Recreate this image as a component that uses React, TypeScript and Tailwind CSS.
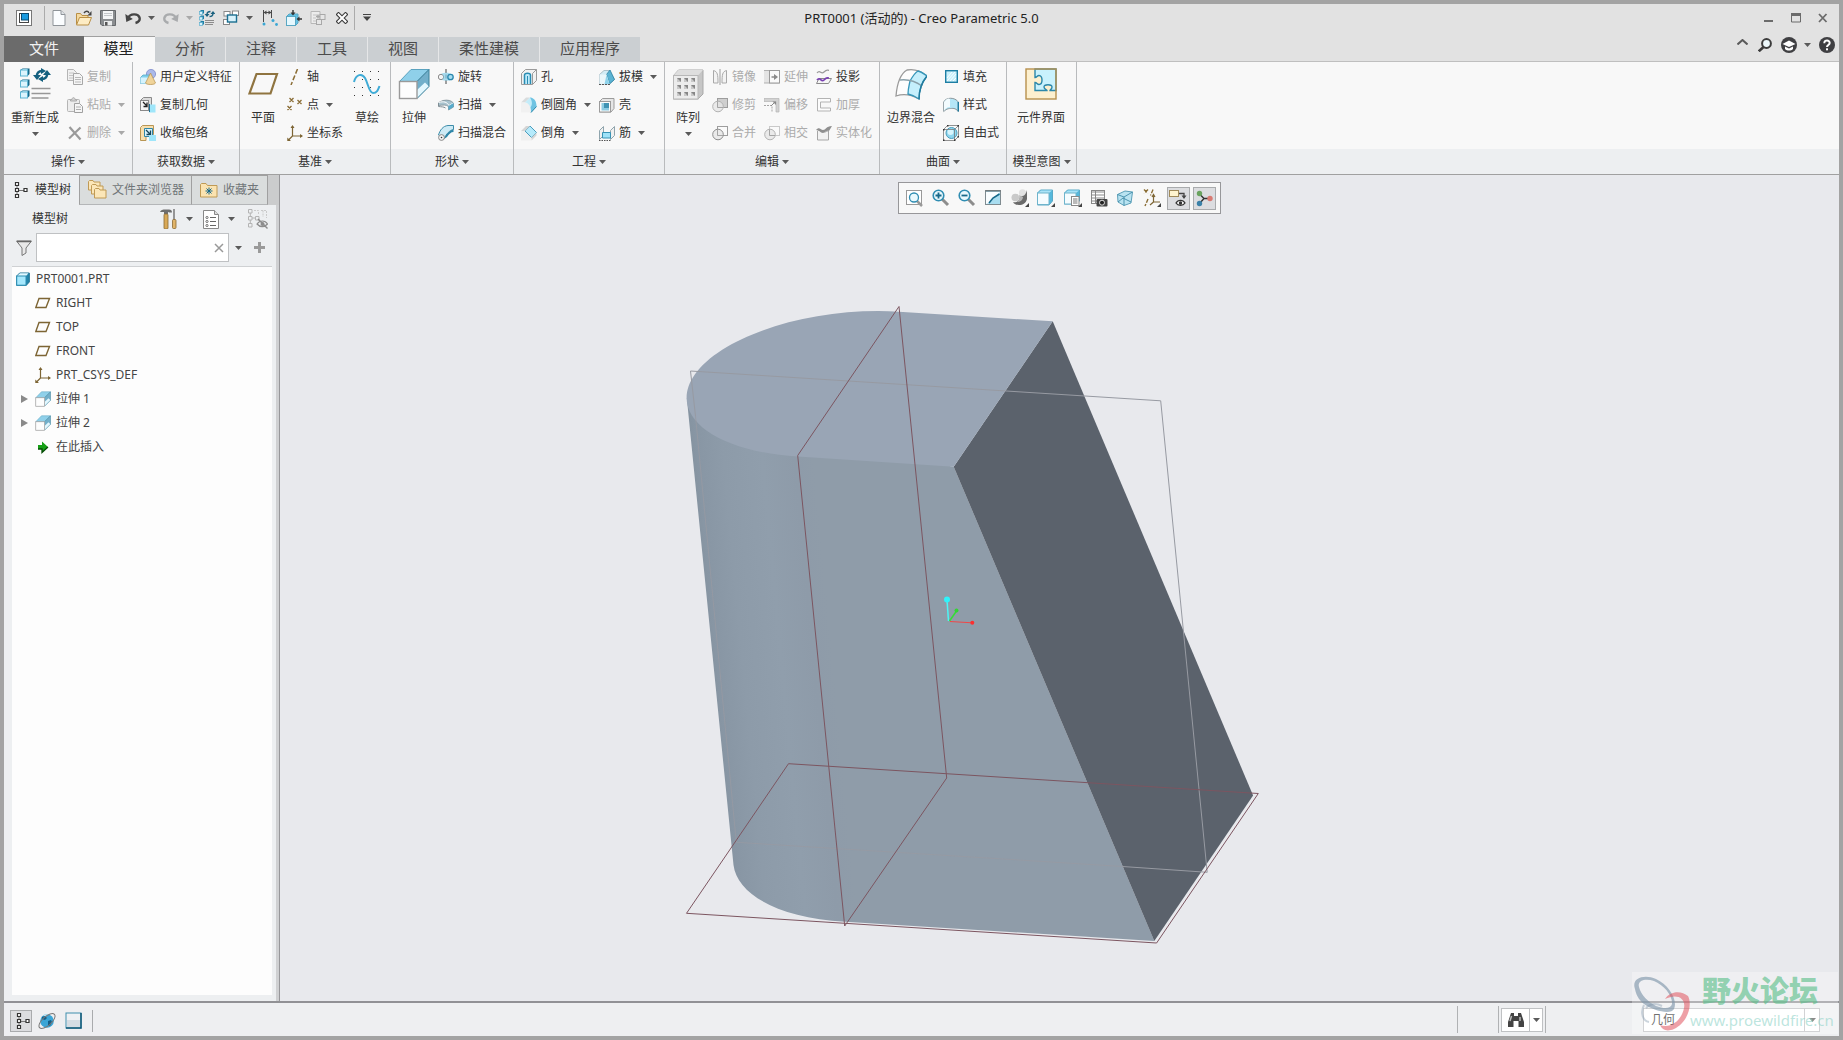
import React from "react";

type Kids = { children?: React.ReactNode };

function I({ s = 16, h, children }: Kids & { s?: number; h?: number }) {
  return (
    <svg width={s} height={h ?? s} viewBox={`0 0 ${s} ${h ?? s}`} fill="none" className="shrink-0" aria-hidden="true">
      {children}
    </svg>
  );
}

function Arrow({ dim = false }: { dim?: boolean }) {
  return (
    <svg width="7" height="4" viewBox="0 0 7 4" className="shrink-0" aria-hidden="true">
      <path d="M0 0h7L3.5 4z" fill={dim ? "#a9a9a9" : "#5a5a5a"} />
    </svg>
  );
}

/* ---------- quick access icons ---------- */
const AppLogo = () => (
  <I>
    <rect x="0.5" y="0.5" width="15" height="15" fill="#fff" stroke="#777" />
    <rect x="3.500" y="3.500" width="9" height="9" fill="#fff" stroke="#444" />
    <rect x="5.500" y="3.500" width="7" height="6.500" fill="#1a9be0" stroke="#0b4a70" />
  </I>
);
const NewDoc = () => (
  <I>
    <path d="M2 .5h8l4 4v11H2z" fill="#fbfdff" stroke="#8f9499" />
    <path d="M10 .5v4h4" fill="#dfe3e6" stroke="#8f9499" />
  </I>
);
const OpenFolder = () => (
  <I>
    <path d="M.5 14V3.500h4l1.500 2h6v3" fill="#f4d9a0" stroke="#b98f45" />
    <path d="M.5 15l3-7.500h12l-3 7.500z" fill="#fdecc4" stroke="#b98f45" />
    <path d="M8 3c2-2.500 4-2 5 0" stroke="#444" strokeWidth="1.500" />
    <path d="M15.500 1v4.500h-4z" fill="#444" />
  </I>
);
const Save = () => (
  <I>
    <path d="M.5.5h15v15H2l-1.500-1.500z" fill="#8a8d90" stroke="#66696c" />
    <rect x="3" y="1" width="10" height="8" fill="#f4f5f6" />
    <path d="M4 3.500h8M4 5.500h8" stroke="#c4c7ca" />
    <rect x="4" y="11" width="8" height="4.500" fill="#e9ebec" />
    <rect x="5" y="12" width="2.500" height="3.500" fill="#555" />
  </I>
);
const Undo = ({ dim = false, flip = false }) => (
  <I>
    <g transform={flip ? "translate(16 0) scale(-1 1)" : undefined}>
      <path d="M3 8c2-4.500 10-5 11.500-.5.8 3-1 4.800-4 5.500" stroke={dim ? "#a9abad" : "#454545"} strokeWidth="2.400" />
      <path d="M.3 4l1 8 6.500-3z" fill={dim ? "#a9abad" : "#454545"} />
    </g>
  </I>
);
function Cube({ x, y, s = 4 }: { x: number; y: number; s?: number }) {
  return (
    <g>
      <path d={`M${x} ${y + 1}l1.500-1.500h${s}v${s}l-1.500 1.500z`} fill="#1e7fa6" />
      <rect x={x} y={y + 1} width={s} height={s} fill="#d8f3fd" stroke="#5fb1cf" strokeWidth=".7" />
    </g>
  );
}
const Regen = () => (
  <I>
    <Cube x={0.5} y={0.5} s={3} />
    <Cube x={0.5} y={6} s={3} />
    <Cube x={0.5} y={11.5} s={3} />
    <path d="M8 4.500C8 2.500 9.500 1.500 11.500 1.500M14 3.500c0 2-1.500 3-3.500 3" stroke="#1b617f" strokeWidth="1.400" />
    <path d="M5.500 4h5L8 7zM11.500 4h5L14 1z" fill="#1b617f" />
    <path d="M6 10.500h9M6 12.500h9M6 14.500h8" stroke="#8c8c8c" />
  </I>
);
const Windows = () => (
  <I>
    <rect x="1" y="1.500" width="6" height="4.500" fill="#fff" stroke="#888" />
    <rect x="9.500" y="1" width="6" height="4.500" fill="#fff" stroke="#888" />
    <rect x=".5" y="9.500" width="6" height="5" fill="#fff" stroke="#888" />
    <rect x="4.500" y="5" width="9" height="7" fill="#d9f2fb" stroke="#1b6f91" strokeWidth="1.400" />
  </I>
);
const Measure = () => (
  <I>
    <path d="M1.500 0v12M9.500 0v8M1.500 2.500h8" stroke="#4a4a4a" />
    <path d="M1.500 2.500l3-2v4zM9.500 2.500l-3-2v4z" fill="#4a4a4a" />
    <circle cx="2" cy="14" r="1.500" fill="#3ba7d4" />
    <circle cx="11" cy="10.500" r="1.500" fill="#3ba7d4" />
    <circle cx="14.500" cy="14.500" r="1.400" fill="#3ba7d4" />
  </I>
);
const BoxArrow = () => (
  <I>
    <path d="M.5 6.500l2.500-2.500h9v9l-2.500 2.500h-9z" fill="#62c2e6" stroke="#5aa7c3" />
    <rect x=".5" y="6.500" width="9" height="9" fill="#e6f8fe" stroke="#5aa7c3" />
    <path d="M7 0v4M16 9h-4" stroke="#333" strokeWidth="1.400" />
    <path d="M4.500 2.500h5L7 5.500zM13.500 6.500v5L10.500 9z" fill="#333" />
  </I>
);
const GrayCubes = () => (
  <I>
    <path d="M1 1.500h9v12H1z" fill="#ececec" stroke="#b7b7b7" />
    <path d="M3 5h4M3 8h3M3 11h4" stroke="#c2c2c2" />
    <rect x="6.500" y="9.500" width="5" height="5" fill="#e6e6e6" stroke="#a8a8a8" />
    <rect x="10" y="4.500" width="5" height="5" fill="#e6e6e6" stroke="#a8a8a8" />
    <path d="M6 6.500h4M8 4.500v4" stroke="#a8a8a8" strokeWidth="1.500" />
  </I>
);
const XBold = () => (
  <I s={12}>
    <path d="M2.500 2.500l7 7M9.500 2.500l-7 7" stroke="#3c3c3c" strokeWidth="4.200" strokeLinecap="square" />
    <path d="M2.500 2.500l7 7M9.500 2.500l-7 7" stroke="#fff" strokeWidth="2" strokeLinecap="square" />
  </I>
);

/* ---------- ribbon icons ---------- */
const BigRegen = () => (
  <I s={32}>
    {[1, 12, 23].map((y) => (
      <g key={y}>
        <path d={`M1.500 ${y + 1}l2-1.500h7v5.500l-2 2z`} fill="#17698a" />
        <path d={`M2.500 ${y + 1}l1.500-1h5l-1 1z`} fill="#bdeafb" />
        <rect x="1.500" y={y + 1} width="7" height="6" fill="#dbf4fd" stroke="#5db4d2" />
      </g>
    ))}
    <path d="M18 8.500c-.5-3 1.500-5.500 5-5.500M28 5.500c.5 3-1.500 5.500-5 5.500" stroke="#14607f" strokeWidth="2.400" />
    <path d="M14 7h8l-4 5zM24 7h8l-4-5zM22 0l5 3-5 3zM24 8l-5 3 5 3z" fill="#14607f" />
    <path d="M12.500 20.500h19M12.500 25.500h19M12.500 30h17" stroke="#979797" strokeWidth="1.600" />
  </I>
);
const Copy = () => (
  <I>
    <path d="M.5.5h6l3 3v8h-9z" fill="#f1f1f1" stroke="#b5b5b5" />
    <path d="M2 4h5M2 6.500h5M2 9h5" stroke="#c4c4c4" />
    <path d="M6.500 4.500h6l3 3v8h-9z" fill="#f5f5f5" stroke="#a7a7a7" />
    <path d="M8 8.500h6M8 10.500h6M8 13h6" stroke="#b9b9b9" />
  </I>
);
const Paste = () => (
  <I>
    <rect x=".5" y="2.500" width="12" height="12" rx="1" fill="#ededed" stroke="#b5b5b5" />
    <path d="M3.500 4V2.500h1.500C5 0 8 0 8 2.500h1.500V4z" fill="#d4d4d4" stroke="#ababab" />
    <path d="M7.500 6.500h5l3 3v6h-8z" fill="#f6f6f6" stroke="#a0a0a0" />
    <path d="M9 10h5M9 12.500h5" stroke="#b0b0b0" />
  </I>
);
const Del = () => (
  <I>
    <path d="M2.500 2l11 12.500M13.500 2.500L2 13.500" stroke="#9a9a9a" strokeWidth="2.200" />
  </I>
);
const Udf = () => (
  <I>
    <circle cx="11" cy="5" r="4.600" fill="#aab9ea" stroke="#7f8ccb" strokeWidth=".8" />
    <path d="M.5 8.500L3 6h7v6l-2 2.500H.5z" fill="#7fd0ec" stroke="#55a9c8" strokeWidth=".8" />
    <rect x=".5" y="8.500" width="8" height="6" fill="#d5f3fd" />
    <path d="M10.500 4l5 10c-1 2-9 2-10 0z" fill="#f0d49a" stroke="#b58f4c" strokeWidth=".7" />
  </I>
);
const CopyGeom = () => (
  <I>
    <path d="M.5 3.500l3-3h8v11" fill="#dcdcdc" stroke="#8a8a8a" />
    <rect x=".5" y="3.500" width="8" height="10" fill="#f6f6f6" stroke="#8a8a8a" />
    <path d="M3 5l3.500 3.500M7 5.500v4H3.500" stroke="#222" strokeWidth="1.300" />
    <path d="M9 7.500h6.500v8H9z" fill="#9fe6fa" />
    <path d="M9.500 15V7" stroke="#1e6f93" />
  </I>
);
const Shrink = () => (
  <I>
    <path d="M.5 2.500l2-2h11v9H6v6H.5z" fill="#f7dfae" stroke="#b99654" />
    <path d="M4.500 3.500h8v8h-8z" fill="#d8f3fd" stroke="#2f87a8" />
    <path d="M6 5l4 4M10.500 5.500v4h-4" stroke="#16465a" strokeWidth="1.300" />
    <rect x="9" y="10" width="7" height="6" fill="#9fe6fa" />
  </I>
);
const BigPlane = () => (
  <I s={32}>
    <path d="M9.500 6h20.500l-6.500 19.500H2.500z" stroke="#8f7440" strokeWidth="2.200" />
  </I>
);
const Axis = () => (
  <I>
    <path d="M10.500 0L4 16" stroke="#8a6d35" strokeWidth="1.500" strokeDasharray="5 2" />
  </I>
);
const Points = () => (
  <I>
    <path d="M2.500 1l4 4m0-4l-4 4M10.500 3l4 4m0-4l-4 4M.5 9l4 4m0-4l-4 4" stroke="#8a6d35" strokeWidth="1.300" />
  </I>
);
const Csys = () => (
  <I>
    <path d="M5.500 1v10H15M5.500 11L1 15.500" stroke="#7d6534" strokeWidth="1.200" />
    <path d="M3.500 3l2-3 2 3zM13 9l3 2-3 2zM.3 12.500V16H4z" fill="#7d6534" />
  </I>
);
const BigSketch = () => (
  <I s={28}>
    {[1, 9, 17, 25].map((y) =>
      [1, 9, 17, 25].map((x) => <rect key={`${x}-${y}`} x={x} y={y} width="1" height="1" fill="#333" />)
    )}
    <path d="M1 12C3 4 9 3 12 8s4 15 8 15 5-3 6.500-7" stroke="#3fabd6" strokeWidth="2" />
  </I>
);
const Extrude = ({ s = 16 }) => (
  <svg width={s} height={s} viewBox="0 0 32 32" fill="none" className="shrink-0" aria-hidden="true">
    <path d="M1.500 13.500L13 1.500h18L19 13.500z" fill="#8fd0ea" stroke="#5ba3bf" />
    <path d="M19 13.500L31 1.500v17L19 30.500z" fill="#72afca" />
    <path d="M19 30.500V22l8-7.500 4 4z" fill="#e3f7fe" />
    <path d="M19 13.500L31 1.500v17L19 30.500" stroke="#3b8099" />
    <rect x="1.500" y="13.500" width="17.500" height="17" fill="#fdfdfd" stroke="#9a9a9a" strokeWidth="1.400" />
  </svg>
);
const Revolve = () => (
  <I>
    <path d="M8 0v16" stroke="#444" strokeDasharray="4 1.500" />
    <circle cx="3" cy="8" r="2.700" fill="#f4f4f4" stroke="#8a8a8a" />
    <path d="M3 5c5-2 8-1 10 0v6c-3 1-6 1-9 0 2-2 2-4 0-6z" fill="#86cfea" opacity=".7" />
    <circle cx="12.500" cy="8" r="2.700" fill="#a8def1" stroke="#2a87ad" strokeWidth="1.300" />
  </I>
);
const Sweep = () => (
  <I>
    <path d="M.5 5.500L5 3.500c5-1 8 0 10.500 2.500v4l-5 3V9.500C8 7.500 5 8 .5 8.500z" fill="#a9c3ce" stroke="#7e8d94" strokeWidth=".8" />
    <path d="M.5 5.500C6 4 9 5 11 8.500l4.500-2.500" stroke="#fff" />
    <path d="M10.500 9l5-3v4l-5 3z" fill="#57abcb" />
    <path d="M.5 6v3.500c3 .5 5 0 7 1.500" stroke="#7e8d94" />
  </I>
);
const SweepBlend = () => (
  <I>
    <path d="M.5 10C2 5 5 1 10 .5h5.500v4C12 5 8 9 6 14z" fill="#cdeaf5" stroke="#3d8ca9" />
    <path d="M15.500 4.500C12 5 8 9 6 14l3-2c2-3 4-5 6.500-5z" fill="#2e86a8" />
    <circle cx="3.500" cy="12.500" r="2.900" fill="#f4f4f4" stroke="#888" />
    <circle cx="3.500" cy="12.500" r=".8" fill="#333" />
  </I>
);
const Hole = () => (
  <I>
    <path d="M.5 4.500l4-4h11v11l-4 4H.5z" fill="#f2f2f2" stroke="#9b9b9b" />
    <path d="M11.500 15.500v-11l4-4" stroke="#9b9b9b" />
    <path d="M3.500 15V6c0-2.500 6-2.500 6 0v9" fill="#bdeafa" stroke="#2a8db3" strokeWidth="1.500" />
    <path d="M6.500 7v8" stroke="#2a8db3" />
  </I>
);
const Round = () => (
  <I>
    <path d="M0 5.500l5-5h4L4 5.500z" fill="#d9dcdd" />
    <path d="M0 5.500h4c4 .5 6 4 6 10H0z" fill="#f1f1f1" />
    <path d="M4 5.500l5-5c4.500.5 6.500 4 6.500 9L10 15.500c0-5.500-2-9.500-6-10z" fill="#c4ecf9" />
    <path d="M9 .5c4.500.5 6.500 4 6.500 9L10 15.500c0-2 0-3.500-.5-5 2-3 2-6-.5-10z" fill="#6fc3e2" />
    <path d="M15.500 9.500L10 15.500" stroke="#2f86a8" />
  </I>
);
const Chamfer = () => (
  <I>
    <path d="M0 6h4l6 6v3.500H0z" fill="#f0f0f0" />
    <path d="M4 6l5-5 6.500 6.500-5 5z" fill="#b5eafb" stroke="#3a93b5" strokeWidth=".9" />
    <path d="M10.500 12.500l5-5v3l-5 5zM0 6l5-5h4L4 6z" fill="#d5d5d5" />
  </I>
);
const Draft = () => (
  <I>
    <path d="M.5 5.500L5 1.500h5l5.500 9-5 4.500H.5z" fill="#d3ecf5" stroke="#9fb4bd" strokeWidth=".8" />
    <path d="M7.500 5.500L11 1l4.500 9.500-5 4.500z" fill="#5bb3d3" stroke="#2a7fa0" strokeWidth=".8" />
    <path d="M.5 5.500h7L10.500 15H.5z" fill="#eaf6fa" />
    <path d="M7.500 6L5.500 15h5z" fill="#8fd3eb" />
    <path d="M0 15.500h11" stroke="#555" strokeDasharray="2 1" />
  </I>
);
const Shell = () => (
  <I>
    <path d="M.5 4.500l3-3h11.500v10l-3 3.500H.5z" fill="#e6e6e6" stroke="#9b9b9b" />
    <rect x=".5" y="4.500" width="11" height="10.500" fill="#fafafa" stroke="#9b9b9b" />
    <rect x="2.500" y="6" width="7.500" height="7.500" fill="#8ccbe2" />
    <rect x="5" y="6" width="5" height="5" fill="#3f93b3" />
  </I>
);
const Rib = () => (
  <I>
    <path d="M.5 5.500l4-4v9l-4 4zM15.500 1.500v9l-4 4v-9z" fill="#f0f0f0" stroke="#8fa4ad" />
    <path d="M3.500 7.500h8v5.500h-8z" fill="#9fe2f8" stroke="#3792b4" />
    <path d="M0 15.500h12" stroke="#555" strokeDasharray="1.500 1" />
  </I>
);
const BigPattern = () => (
  <I s={32}>
    <path d="M1.500 7.500l5-5.500h24.500v24l-5 5H1.500z" fill="#c6c6c6" stroke="#a9a9a9" />
    <path d="M1.500 7.500l5-5.500h24.500l-5 5.500z" fill="#dedede" />
    <rect x="1.500" y="7.500" width="24.500" height="23.500" fill="#ececec" stroke="#b8b8b8" />
    {[10, 17, 24].map((y) =>
      [5, 12, 19].map((x) => (
        <g key={`${x}-${y}`}>
          <rect x={x} y={y} width="4" height="4" fill="#c9c9c9" />
          <path d={`M${x} ${y}h4v4z`} fill="#868686" />
        </g>
      ))
    )}
  </I>
);
const Mirror = () => (
  <I>
    <path d="M1.500 1.500c4 1 4.500 4 4.500 12.500H1.500zM14.500 1.500c-4 1-4.500 4-4.500 12.500h4.500z" fill="#f3f3f3" stroke="#a9a9a9" />
    <path d="M8 0v16" stroke="#9c9c9c" />
  </I>
);
const Trim = ({ v = 0 }) => (
  <I>
    <rect x="5.500" y="1.500" width="10" height="9" fill={v === 0 ? "#cfcfcf" : "#fafafa"} stroke={v === 2 ? "#c9c9c9" : "#9d9d9d"} />
    <circle cx="6" cy="9.500" r="5.300" fill="#e6e6e6" fillOpacity=".8" stroke={v === 1 ? "#8d8d8d" : "#b3b3b3"} />
    <path d="M5.500 10.500V4.500M5.500 10.500h5.500" stroke="#a5a5a5" />
  </I>
);
const Extend = () => (
  <I>
    <path d="M0 1.500h15.500v12.500H0" fill="#e4e4e4" stroke="#b0b0b0" />
    <rect x="5.500" y="1.500" width="10" height="12.500" fill="#fafafa" stroke="#9b9b9b" />
    <path d="M7.500 8h3" stroke="#8a8a8a" strokeWidth="1.500" />
    <path d="M10 5l4 3-4 3z" fill="#8a8a8a" />
  </I>
);
const Offset = () => (
  <I>
    <path d="M0 1.500h15V15h-3V4.500H0z" fill="#d2d2d2" stroke="#b5b5b5" strokeWidth=".7" />
    <path d="M0 8.500h8v7" stroke="#a5a5a5" strokeDasharray="2 1" />
    <path d="M7 9l4-4" stroke="#888" />
    <path d="M8.500 4.500h3.500V8z" fill="#888" />
  </I>
);
const Project = () => (
  <I>
    <path d="M1 4c3-4 4 2 7-1s3-2 5-1.500" stroke="#9a9a9a" strokeWidth="1.200" />
    <path d="M3 9.500h12.500l-3 5H.5z" fill="#f6f6f6" stroke="#8a8a8a" />
    <path d="M1 11c3-4 4 3 7 0s2-2 5-2" stroke="#7a3fb3" strokeWidth="1.700" />
  </I>
);
const Thicken = () => (
  <I>
    <path d="M1.500 1.500h13V5h-10v6h10v3h-13z" fill="#fcfcfc" stroke="#b3b3b3" />
  </I>
);
const Solidify = () => (
  <I>
    <path d="M1.500 15V6c3-3 5 1 7 1s2-1 4-1v9z" fill="#f2f2f2" stroke="#a6a6a6" />
    <path d="M0 5c3-4 5 0 7 0 3 0 3-4 9-4l-3 5c-3-1-4 2-6 2-3 0-3-3-7-3z" fill="#8f8f8f" />
  </I>
);
const BigBlend = () => (
  <I s={32}>
    <path d="M1 28C2 16 5 6 12 2c8-1.500 14 1 20 6-5 6-8 14-8 23-7-4-14-6-23-3z" fill="#fdfdfd" stroke="#9a9a9a" strokeWidth="1.300" />
    <path d="M15 13c4-7 6-9 8-10 4 1 6 3 9 5-5 6-8 14-8 23-4-3-7-4-11-5 0-5 1-8 2-13z" fill="#c5effc" stroke="#3596b9" strokeWidth="1.300" />
    <path d="M5 12c8-1 15 1 22 6" stroke="#8aa1aa" strokeWidth="1.300" />
    <path d="M24 31c0-9 3-17 8-23" stroke="#217c9f" strokeWidth="1.500" />
  </I>
);
const Fill = () => (
  <I>
    <rect x="2.700" y="1.700" width="11.600" height="11.600" fill="#c8effb" stroke="#1d7ea3" strokeWidth="1.400" />
    <path d="M4 9l5-6M4 12l8-9M7 12l6-7M10 12l3-3" stroke="#fff" strokeWidth=".9" />
  </I>
);
const Style = () => (
  <I>
    <path d="M.7 5C3 0 12 0 15.300 5v9.500c-3-4-6-3-7.500-3s-4 0-7.100 3z" fill="#b5e6f7" stroke="#8a969b" />
    <path d="M1 5c3-4 5-4 6-3v8c-3 0-5 2-6 4z" fill="#f2fbfe" />
    <path d="M15.300 5v9.500" stroke="#217c9f" strokeWidth="1.400" />
  </I>
);
const Freestyle = () => (
  <I>
    <circle cx="8.500" cy="8" r="5.500" fill="#8fd6ef" stroke="#4a9dbb" />
    <circle cx="7.500" cy="7" r="3" fill="#d9f5fd" />
    <path d="M.5 4.500l4-4h11v11l-4 4H.5zM.5 4.500h11v11M11.500 4.500l4-4" stroke="#777" strokeWidth=".8" />
    <path d="M0 4h1.500v1.500H0zM14.500 0H16v1.500h-1.500zM0 14.500h1.500V16H0zM11 14.500h1.500V16H11zM14.500 11H16v1.500h-1.500zM4 0h1.500v1.500H4z" fill="#333" />
  </I>
);
const BigPuzzle = () => (
  <I s={32}>
    <rect x="1" y="1" width="30" height="30" fill="#fdf0cf" />
    <path d="M10 1h21v21.500h-6c0-1 2-1 2-3.500 0-3-8-3-8 0 0 2.500 3 2.500 3 3.500h-12v-8c2 0 2 2 4 2 4 0 4-9 0-9-2 0-2 2-4 2z" fill="#c9f2fd" stroke="#2c88aa" strokeWidth="1.400" />
    <rect x="1" y="1" width="30" height="30" stroke="#b7904d" strokeWidth="1.400" />
  </I>
);

/* ---------- ribbon building blocks ---------- */
function Small({ icon, label, arrow, off }: { icon: React.ReactNode; label: string; arrow?: boolean; off?: boolean }) {
  return (
    <button disabled={off} className={`flex h-7 items-center gap-1 whitespace-nowrap ${off ? "text-[#ababab]" : "text-[#333]"}`}>
      {icon}
      <span>{label}</span>
      {arrow && <span className="ml-[3px] flex"><Arrow dim={off} /></span>}
    </button>
  );
}
function Col({ children, w = "" }: Kids & { w?: string }) {
  return <div className={`flex flex-col items-start pt-px ${w}`}>{children}</div>;
}
function Big({ icon, label, w, arrow }: { icon: React.ReactNode; label: string; w: string; arrow?: boolean }) {
  return (
    <button className={`flex flex-col items-center self-start whitespace-nowrap pt-1.5 text-[#333] ${w}`}>
      <span className="flex h-8 items-center">{icon}</span>
      <span className="mt-[9px] leading-[18px]">{label}</span>
      {arrow && <span className="mt-[5px] flex"><Arrow /></span>}
    </button>
  );
}
function Group({ w, pad, label, children }: Kids & { w: string; pad: string; label: string }) {
  return (
    <section className={`flex flex-col border-r border-[#b9bbbd] ${w}`}>
      <div className={`flex h-[87px] ${pad}`}>{children}</div>
      <button className="flex h-[25px] items-center justify-center gap-[3px] whitespace-nowrap bg-[#edeff1] text-[#333]">
        <span>{label}</span>
        <Arrow />
      </button>
    </section>
  );
}

function QBtn({ children, w = "w-6", label }: Kids & { w?: string; label: string }) {
  return (
    <button aria-label={label} className={`flex h-6 items-center justify-center ${w}`}>
      {children}
    </button>
  );
}

function TitleBar() {
  return (
    <header className="relative flex h-8 shrink-0 items-center justify-between">
      <div className="flex items-center pb-1">
        <QBtn w="w-10" label="应用"><AppLogo /></QBtn>
        <span className="h-6 w-px bg-[#ababab]" />
        <QBtn w="w-[28px]" label="新建"><NewDoc /></QBtn>
        <QBtn w="w-[22px]" label="打开"><OpenFolder /></QBtn>
        <QBtn w="w-[26px]" label="保存"><Save /></QBtn>
        <QBtn label="撤消"><Undo /></QBtn>
        <QBtn w="w-3" label="撤消列表"><Arrow /></QBtn>
        <span className="w-0.5" />
        <QBtn label="重做"><Undo dim flip /></QBtn>
        <QBtn w="w-3" label="重做列表"><Arrow dim /></QBtn>
        <QBtn label="重新生成"><Regen /></QBtn>
        <QBtn label="窗口"><Windows /></QBtn>
        <QBtn w="w-3" label="窗口列表"><Arrow /></QBtn>
        <span className="w-[3px]" />
        <QBtn label="测量"><Measure /></QBtn>
        <QBtn label="模型"><BoxArrow /></QBtn>
        <QBtn label="装配"><GrayCubes /></QBtn>
        <QBtn label="关闭文件"><XBold /></QBtn>
        <span className="h-6 w-px bg-[#ababab]" />
        <QBtn label="自定义">
          <I s={8}><path d="M0 .5h8" stroke="#444" /><path d="M0 2.500h8L4 7z" fill="#444" /></I>
        </QBtn>
      </div>
      <h1 className="pointer-events-none absolute inset-x-0 top-1 text-center text-[13px] leading-5 text-[#222]">
        PRT0001 (活动的) - Creo Parametric 5.0
      </h1>
      <div className="flex items-center gap-[17px] pr-[11px] pb-1">
        <button aria-label="最小化"><I s={10}><path d="M0 8h9" stroke="#6b6b6b" strokeWidth="2" /></I></button>
        <button aria-label="最大化"><I s={10}><path d="M.5.500h9v8.500h-9z" stroke="#6b6b6b" /><path d="M0 1.500h10" stroke="#6b6b6b" strokeWidth="3" /></I></button>
        <button aria-label="关闭"><I s={10}><path d="M1 1l7.500 8M8.500 1L1 9" stroke="#6b6b6b" strokeWidth="1.800" /></I></button>
      </div>
    </header>
  );
}

function TabBar() {
  const tabs = ["分析", "注释", "工具", "视图"];
  return (
    <nav className="flex h-[26px] shrink-0 text-[15px] text-[#4b4b4b]">
      <button className="w-20 bg-[#6b6b6b] pb-[3px] text-[#f2f2f2]">文件</button>
      <button className="w-[71px] border-t border-[#a0a0a0] bg-[#f8f8f8] pr-0.5 pb-1 text-[#222]">模型</button>
      {tabs.map((t) => (
        <button key={t} className="mt-px w-[71px] border-r border-[#e6e7e8] bg-[#cbcfd2] pb-[3px]">{t}</button>
      ))}
      <button className="mt-px w-[101px] border-r border-[#e6e7e8] bg-[#cbcfd2] pb-[3px]">柔性建模</button>
      <button className="mt-px w-[100px] bg-[#cbcfd2] pb-[3px]">应用程序</button>
      <div className="flex grow items-center justify-end border-b border-[#bfbfbf] pr-1 pb-[7px]">
        <button aria-label="折叠功能区" className="mb-1.5 mr-2.5"><I s={11} h={6}><path d="M.5 5.500l5-4.500 5 4.500" stroke="#5a5a5a" strokeWidth="2" /></I></button>
        <button aria-label="搜索" className="mr-[9px]"><I s={14}><circle cx="8.500" cy="5.500" r="4.400" fill="#eef9fc" stroke="#3c3c3c" strokeWidth="2" /><path d="M5.500 9L.8 13.300" stroke="#3c3c3c" strokeWidth="2.600" /></I></button>
        <button aria-label="学习" className="mr-[7px]"><I><circle cx="8" cy="8" r="8" fill="#3f3f42" /><path d="M1.500 7L8 3.500 14.500 7 8 10z" fill="#fff" /><path d="M4 9.500v2.500c2 2 6 2 8 0V9.500L8 11.500z" fill="#fff" /></I></button>
        <button aria-label="学习列表" className="mr-2"><Arrow /></button>
        <button aria-label="帮助"><I><circle cx="8" cy="8" r="8" fill="#3f3f42" /><path d="M5.300 6.300c0-4 5.600-3.500 5.400-.3-.1 2-2.700 2-2.700 4" stroke="#fff" strokeWidth="2" /><rect x="7" y="11.300" width="2" height="2" fill="#fff" /></I></button>
      </div>
    </nav>
  );
}

function Ribbon() {
  return (
    <div className="flex h-[113px] shrink-0 border-b border-[#a0a0a0] bg-[#f8f8f8]">
      <Group w="w-[129px]" pad="pl-[3px]" label="操作">
        <Big icon={<BigRegen />} label="重新生成" w="w-14" arrow />
        <Col w="ml-1">
          <Small icon={<Copy />} label="复制" off />
          <Small icon={<Paste />} label="粘贴" off arrow />
          <Small icon={<Del />} label="删除" off arrow />
        </Col>
      </Group>
      <Group w="w-[107px]" pad="pl-[7px]" label="获取数据">
        <Col>
          <Small icon={<Udf />} label="用户定义特征" />
          <Small icon={<CopyGeom />} label="复制几何" />
          <Small icon={<Shrink />} label="收缩包络" />
        </Col>
      </Group>
      <Group w="w-[151px]" pad="pl-[5px]" label="基准">
        <Big icon={<BigPlane />} label="平面" w="w-9" />
        <Col w="ml-1.5 w-[60px]">
          <Small icon={<Axis />} label="轴" />
          <Small icon={<Points />} label="点" arrow />
          <Small icon={<Csys />} label="坐标系" />
        </Col>
        <Big icon={<BigSketch />} label="草绘" w="w-10" />
      </Group>
      <Group w="w-[123px]" pad="pl-[5px]" label="形状">
        <Big icon={<Extrude s={32} />} label="拉伸" w="w-9" />
        <Col w="ml-1.5">
          <Small icon={<Revolve />} label="旋转" />
          <Small icon={<Sweep />} label="扫描" arrow />
          <Small icon={<SweepBlend />} label="扫描混合" />
        </Col>
      </Group>
      <Group w="w-[151px]" pad="pl-[7px]" label="工程">
        <Col w="w-[78px]">
          <Small icon={<Hole />} label="孔" />
          <Small icon={<Round />} label="倒圆角" arrow />
          <Small icon={<Chamfer />} label="倒角" arrow />
        </Col>
        <Col>
          <Small icon={<Draft />} label="拔模" arrow />
          <Small icon={<Shell />} label="壳" />
          <Small icon={<Rib />} label="筋" arrow />
        </Col>
      </Group>
      <Group w="w-[215px]" pad="pl-[5px]" label="编辑">
        <Big icon={<BigPattern />} label="阵列" w="w-9" arrow />
        <Col w="ml-1.5 w-[52px]">
          <Small icon={<Mirror />} label="镜像" off />
          <Small icon={<Trim />} label="修剪" off />
          <Small icon={<Trim v={1} />} label="合并" off />
        </Col>
        <Col w="w-[52px]">
          <Small icon={<Extend />} label="延伸" off />
          <Small icon={<Offset />} label="偏移" off />
          <Small icon={<Trim v={2} />} label="相交" off />
        </Col>
        <Col>
          <Small icon={<Project />} label="投影" />
          <Small icon={<Thicken />} label="加厚" off />
          <Small icon={<Solidify />} label="实体化" off />
        </Col>
      </Group>
      <Group w="w-[127px]" pad="pl-[3px]" label="曲面">
        <Big icon={<BigBlend />} label="边界混合" w="w-14" />
        <Col w="ml-1">
          <Small icon={<Fill />} label="填充" />
          <Small icon={<Style />} label="样式" />
          <Small icon={<Freestyle />} label="自由式" />
        </Col>
      </Group>
      <Group w="w-[70px]" pad="" label="模型意图">
        <Big icon={<BigPuzzle />} label="元件界面" w="w-[68px]" />
      </Group>
      <div className="flex grow flex-col justify-end"><div className="h-[25px] bg-[#edeff1]" /></div>
    </div>
  );
}

/* ---------- model tree ---------- */
const TreeIcon = () => (
  <I>
    <path d="M3 4v8M5 8.500h5" stroke="#777" />
    <path d="M1.500 .5h3v3h-3zM1.500 6.500h3v3h-3zM1.500 12.500h3v3h-3zM10 6.500h3v3h-3z" fill="#fff" stroke="#333" strokeWidth="1.200" />
  </I>
);
const Folder = ({ x, y }: { x: number; y: number }) => (
  <path transform={`translate(${x} ${y})`} d="M.5 10V1.500L1.500.5h3.500l1 1.500h6V10z" fill="#fbe6b8" stroke="#c09a55" />
);
const Folders = () => (
  <I s={20}><Folder x={0} y={0} /><Folder x={3} y={4} /><Folder x={6} y={8} /></I>
);
const FavFolder = () => (
  <I s={18}>
    <path d="M.5 16V3.500l1-1h4.500l1.500 2h9.500V16z" fill="#fbe3b0" stroke="#bf9a55" />
    <path d="M9 6.500v7M5.500 10h7M6.500 7.500l5 5M11.500 7.500l-5 5" stroke="#17698a" />
  </I>
);
const Tools = () => (
  <I s={18} h={20}>
    <path d="M0 3c1-3 4-2.500 9-2.500 2 0 3 1 3 3h-2.500L8 3v2H4V3z" fill="#6e6e6e" />
    <rect x="4" y="5" width="4" height="15" rx="1" fill="#d9a957" stroke="#8a6a33" strokeWidth=".8" />
    <path d="M14 0v11" stroke="#777" strokeWidth="1.500" />
    <rect x="12.500" y="10.500" width="3.500" height="9" rx="1" fill="#e0b46a" stroke="#8a6a33" strokeWidth=".8" />
  </I>
);
const ListDoc = () => (
  <I s={16} h={19}>
    <path d="M.5.500h11l4 4v14H.5z" fill="#fff" stroke="#888" />
    <path d="M11.500.5v4h4" fill="#ddd" stroke="#888" />
    <path d="M7 7.500h6M7 11.500h6M7 15.500h6" stroke="#666" />
    <circle cx="4" cy="7.500" r="1.100" stroke="#555" strokeWidth=".8" />
    <circle cx="4" cy="11.500" r="1.100" stroke="#555" strokeWidth=".8" />
    <circle cx="4" cy="15.500" r="1.100" stroke="#555" strokeWidth=".8" />
  </I>
);
const TreeHide = () => (
  <I s={20}>
    <path d="M.5.500H4V4H.5zM.5 7.500H4V11H.5zM.5 14.500H4V18H.5zM7.500 7.500H11V11H7.500zM2.300 4v3M2.300 11v3M4 9h3" stroke="#b4b4b4" />
    <path d="M6 1.500h4.500v4M13 1.500h5.500V9M15 1.500V8" stroke="#cacaca" strokeDasharray="2 1" />
    <path d="M9 15c3-4 8-4 10.500 0-3 3.500-7.500 3.500-10.500 0z" stroke="#8c8c8c" strokeWidth="1.200" />
    <circle cx="14.500" cy="15" r="2" fill="#8c8c8c" />
    <path d="M10 10l9.500 9.500" stroke="#8c8c8c" strokeWidth="1.400" />
  </I>
);
const Funnel = () => (
  <I>
    <path d="M.5 1h15l-5.500 7v5l-4 2.500V8z" fill="#e8e8e8" stroke="#777" />
    <path d="M1 1.500h14" stroke="#666" strokeWidth="1.500" />
  </I>
);
const PartIcon = () => (
  <I s={14}>
    <path d="M.7 4l3-3h9.600v9l-3 3.300H.7z" fill="#2385aa" stroke="#1b7193" />
    <path d="M1 4l3-2.700h8.500L10 4z" fill="#e2f8ff" />
    <rect x=".7" y="4" width="9.300" height="9.200" fill="#a6e8fd" stroke="#2c8db2" />
  </I>
);
const PlaneIcon = () => (
  <I><path d="M4 3.500h10.500L11 12.500H.8z" stroke="#7d6534" strokeWidth="1.400" /></I>
);
const Insert = () => (
  <I><path d="M3 6h4V2.500L13 8l-6 5.500V10H3z" fill="#16a016" /><path d="M3 10h4v3.500L13 8" stroke="#064d06" strokeWidth="1.300" /></I>
);

const treeItems: { icon: React.ReactNode; label: string; open?: boolean }[] = [
  { icon: <PlaneIcon />, label: "RIGHT" },
  { icon: <PlaneIcon />, label: "TOP" },
  { icon: <PlaneIcon />, label: "FRONT" },
  { icon: <Csys />, label: "PRT_CSYS_DEF" },
  { icon: <Extrude />, label: "拉伸 1", open: true },
  { icon: <Extrude />, label: "拉伸 2", open: true },
  { icon: <Insert />, label: "在此插入" },
];

function SidePanel() {
  return (
    <aside className="flex w-[276px] shrink-0 flex-col border-r border-[#97979a] bg-[#edeff1]">
      <div className="flex h-[30px] shrink-0 bg-[#cbcccd] text-[#707578]">
        <button className="flex w-[75px] items-center gap-[5px] bg-[#edeff1] pl-2.5 text-[#333]"><TreeIcon />模型树</button>
        <button className="flex w-[113px] items-center gap-1 border border-[#a0a0a0] border-b-[#b4b6b8] bg-[#dadddd] pl-2"><Folders />文件夹浏览器</button>
        <button className="flex w-[76px] items-center gap-[5px] border border-l-0 border-[#a0a0a0] border-b-[#b4b6b8] bg-[#dadddd] pl-2"><FavFolder />收藏夹</button>
      </div>
      <div className="flex min-h-0 grow border-r-[3px] border-[#cfd0d2]">
        <div className="flex min-w-0 grow flex-col">
          <div className="flex h-7 items-center pl-7 pr-2 text-[#333]">
            <h2 className="grow">模型树</h2>
            <button aria-label="设置" className="flex items-center gap-2"><Tools /><Arrow /></button>
            <button aria-label="显示" className="ml-2.5 flex items-center gap-[9px]"><ListDoc /><Arrow /></button>
            <button aria-label="隐藏" className="ml-[13px]"><TreeHide /></button>
          </div>
          <div className="flex h-[29px] items-center pl-3">
            <Funnel />
            <label className="ml-1 flex h-[29px] w-[193px] items-center border border-[#bfc1c3] bg-white pr-1">
              <input aria-label="过滤" className="h-full min-w-0 grow px-1 outline-none" />
              <I s={10}><path d="M1 1l8 8M9 1L1 9" stroke="#999" strokeWidth="1.500" /></I>
            </label>
            <button aria-label="过滤列表" className="ml-1.5"><Arrow /></button>
            <button aria-label="添加" className="ml-3"><I s={11}><path d="M5.500 0v11M0 5.500h11" stroke="#9a9a9a" strokeWidth="3" /></I></button>
          </div>
          <ul className="mx-2 mb-1.5 mr-1 mt-1 grow border-t border-[#cfd1d3] bg-[#fdfdfd] text-[#444]">
            <li className="flex h-6 items-center gap-1.5 pl-1"><PartIcon />PRT0001.PRT</li>
            {treeItems.map((t) => (
              <li key={t.label} className="flex h-6 items-center pl-2">
                <span className="w-[15px]">
                  {t.open && <I s={8}><path d="M1 0l7 4-7 4z" fill="#8a8a8a" /></I>}
                </span>
                {t.icon}
                <span className="pl-[5px]">{t.label}</span>
              </li>
            ))}
          </ul>
        </div>
      </div>
    </aside>
  );
}

/* ---------- viewport ---------- */
const Lens = ({ mark }: { mark?: string }) => (
  <I s={18}>
    <path d="M10 10l6 6" stroke="#8d8d8d" strokeWidth="3" />
    <circle cx="6.500" cy="6.500" r="5.300" fill="#e9f8fd" stroke="#2f8db2" strokeWidth="1.600" />
    {mark && <path d={mark} stroke="#17698a" strokeWidth="1.800" />}
  </I>
);
const Corner = () => <path d="M18 14v4h-4z" fill="#444" />;

const viewTools: { label: string; icon: React.ReactNode; on?: boolean }[] = [
  { label: "重新调整", icon: <I s={17}><rect x=".5" y=".5" width="15" height="14" fill="#fff" stroke="#999" /><path d="M11 11l5 5" stroke="#999" strokeWidth="2.500" /><circle cx="8" cy="7.500" r="4.500" fill="#e9f8fd" stroke="#2f8db2" strokeWidth="1.300" /></I> },
  { label: "放大", icon: <Lens mark="M3.500 6.500h6M6.500 3.500v6" /> },
  { label: "缩小", icon: <Lens mark="M3.500 6.500h6" /> },
  { label: "重画", icon: <I s={18}><rect x=".5" y="1.500" width="15" height="14" fill="#a9ddf0" stroke="#7f8b90" /><path d="M1 3h14L4 14l-3 1z" fill="#fafdff" /><path d="M.5 2h15" stroke="#666" /><path d="M14.500 5L8 9l-4 5" stroke="#17698a" strokeWidth="1.600" /></I> },
  { label: "渲染选项", icon: <I s={18}><circle cx="11.500" cy="3.800" r="3.600" fill="#e2e2e2" /><path d="M9 7c4 1 6-2 7-6v9c-1 4-4 6-8 6-3 0-5-1-6-3 4 1 7-2 7-6z" fill="#6a6a6a" /><path d="M8 6c1 3 0 5-2 7 3 0 6-2 6-5z" fill="#b5b5b5" /><circle cx="4.300" cy="8.500" r="3.800" fill="#c9c9c9" /><Corner /></I> },
  { label: "显示样式", icon: <I s={18}><path d="M.5 4l3-3h12v11l-3.500 4H.5z" fill="#56b8dc" stroke="#5aaac7" /><path d="M1 4l3-2.500h11L12 4z" fill="#a9e3f7" /><rect x=".5" y="4" width="11.500" height="11.500" fill="#f5fcff" stroke="#6fb4cc" /><Corner /></I> },
  { label: "已保存方向", icon: <I s={18}><path d="M.5 4l3-3h12v11l-3.500 3H.5z" fill="#56b8dc" stroke="#5aaac7" /><path d="M1 4l3-2.500h11L12 4z" fill="#a9e3f7" /><rect x=".5" y="4" width="11.500" height="11" fill="#f5fcff" stroke="#6fb4cc" /><rect x="7.500" y="7.500" width="7.500" height="9" fill="#fff" stroke="#888" /><path d="M9 10h4.500M9 12h4.500M9 14h4.500" stroke="#777" /><Corner /></I> },
  { label: "视图管理器", icon: <I s={17}><rect x=".5" y=".5" width="13" height="13" fill="#fff" stroke="#888" /><path d="M.5 2h13M.5 5h13M.5 8h13M.5 11h13M4.500 1v12" stroke="#888" /><rect x="5.500" y="9" width="11" height="7.500" rx="1" fill="#444" /><circle cx="11" cy="12.700" r="2.500" fill="#222" stroke="#ddd" /></I> },
  { label: "透视图", icon: <I><path d="M.5 4.500L8 1l7.500 1-1.500 11-7 2.500L1 12z" fill="#b9e3f1" stroke="#5b9fb8" /><path d="M.5 4.500L7 7l8.500-5M7 7v8.500M1 12l5-4 8 4" stroke="#3f8ba8" strokeWidth=".9" /></I> },
  { label: "基准显示", icon: <I s={18}><path d="M1 .5l4 4m0-4l-4 4M10 .5l-2.500 6M5 10l-3 7" stroke="#8a6d35" strokeWidth="1.400" strokeDasharray="4 1.500" /><path d="M10.500 6v7H17M10.500 13L7 16M9 8l1.500-2.500L12 8" stroke="#7d6534" strokeWidth="1.200" /><Corner /></I> },
  { label: "注释显示", on: true, icon: <I s={18}><rect x=".5" y="1.500" width="9" height="6" fill="#fff4cf" stroke="#a08a5a" /><path d="M10 4.500h5v4" stroke="#444" strokeWidth="1.300" /><path d="M12.500 6.500h5L15 10z" fill="#444" /><path d="M7 14c2-3.500 7-3.500 9 0-2 3-7 3-9 0z" fill="#fff" stroke="#333" strokeWidth="1.300" /><circle cx="11.500" cy="14" r="1.700" fill="#333" /></I> },
  { label: "旋转中心", on: true, icon: <I s={17}><path d="M3.500 4L8 8.500h6M8 8.500L3.500 13.500" stroke="#333" strokeWidth="1.400" /><circle cx="3.500" cy="3.500" r="2.700" fill="#6aa35f" /><circle cx="3.500" cy="13.500" r="2.700" fill="#3b81a8" /><circle cx="14" cy="8.500" r="2.700" fill="#d97a72" /></I> },
];

function Viewport() {
  return (
    <main className="relative min-w-0 grow bg-[#e8e9ed]">
      <svg viewBox="280 175 1559 826" className="absolute inset-0 h-full w-full" role="img" aria-label="PRT0001">
        <defs>
          <linearGradient id="wall" gradientUnits="userSpaceOnUse" x1="702" y1="640" x2="830" y2="628">
            <stop offset="0" stopColor="#82909c" />
            <stop offset=".1" stopColor="#8896a4" />
            <stop offset=".3" stopColor="#8d9ba9" />
            <stop offset=".6" stopColor="#909eac" />
            <stop offset=".85" stopColor="#8e9ba9" />
            <stop offset="1" stopColor="#8f9ca9" />
          </linearGradient>
        </defs>
        <path d="M686.800 398L733.500 865C737 894 778 918 845 921.700L1154.300 941 953.700 466.700 797.700 440z" fill="url(#wall)" />
        <path d="M1052.700 321.300L1253.100 795.500 1154.300 941 953.700 466.700z" fill="#5b626c" />
        <path d="M899 311.700L1052.700 321.300 953.700 466.700 797.700 456.500C712.900 451.200 666.800 414.500 694.800 374.500C722.800 334.500 814.200 306.400 899 311.700z" fill="#99a5b5" />
        <g fill="none" stroke="#979aa2" strokeWidth="1">
          <path d="M1207.200 872.300L1160.700 400.800 690.500 371l5 45" />
          <path d="M1122.500 866.500l84.700 5.800" />
          <path d="M695.500 416l40.800 426.300 386.200 24.200" strokeOpacity=".8" />
        </g>
        <g fill="none" stroke="#7c5560" strokeWidth="1">
          <path d="M899 306.500L797.700 455.500 844.700 926 946.700 778z" />
          <path d="M788.500 763.700L1258.300 793.500 1156.600 943 686.500 913.300z" />
        </g>
        <path d="M948.500 621L947 600" stroke="#4cf5f5" strokeWidth="1.500" />
        <path d="M949.500 621l7-10" stroke="#35dd35" strokeWidth="1.500" />
        <path d="M950 621.500l22 1.300" stroke="#f04848" strokeWidth="1" />
        <circle cx="947" cy="599.500" r="3" fill="#2ff3fb" />
        <circle cx="956.500" cy="610.500" r="2" fill="#33d433" />
        <circle cx="972.300" cy="622.800" r="2" fill="#fb3030" />
      </svg>
      <div className="absolute inset-x-0 top-[7px] flex justify-center">
        <div className="flex h-8 w-[323px] items-center justify-between border border-[#97979a] bg-[#f8f8f8] px-1">
          {viewTools.map((t) => (
            <button
              key={t.label}
              aria-label={t.label}
              className={`flex h-[23px] w-[23px] items-center justify-center ${t.on ? "border border-[#a9abad] bg-[#dcdde0]" : ""}`}
            >
              {t.icon}
            </button>
          ))}
        </div>
      </div>
    </main>
  );
}

function StatusBar() {
  return (
    <footer className="flex h-[35px] shrink-0 items-center justify-between border-t-2 border-[#919195] bg-[#eeeff1] pl-1.5">
      <div className="flex items-center pt-0.5">
        <button aria-label="模型树" className="flex h-[22px] w-[22px] items-center justify-center border border-[#a9abad] bg-[#dcdde0] pl-[5px]"><TreeIcon /></button>
        <button aria-label="浏览器" className="ml-1.5 flex">
          <I s={18}>
            <circle cx="9" cy="9" r="6.800" fill="#3aa5d6" />
            <path d="M4 5l3-1 2 2-2 2-3-1zM10 9l3-1 1 2-2 4-2-1z" fill="#155f87" />
            <path d="M5 3.500c2-1.500 4-1.500 6-1l-3 2z" fill="#bfe8f8" />
            <ellipse cx="9" cy="9" rx="10" ry="4.500" transform="rotate(-42 9 9)" stroke="#777" />
          </I>
        </button>
        <button aria-label="全屏" className="ml-[9px] flex">
          <I s={18}>
            <rect x="1" y="1" width="15" height="15" fill="#eef1f4" stroke="#3f8fae" />
            <path d="M2 8h13v7H2z" fill="#d5dde3" />
            <path d="M16 1v15H1" stroke="#0f5877" strokeWidth="1.500" />
          </I>
        </button>
        <span className="ml-[9px] h-[22px] w-px bg-[#a9abad]" />
      </div>
      <div className="flex items-center pr-[19px]">
        <span className="h-[27px] w-px bg-[#b0b2b4]" />
        <span className="ml-10 h-[27px] w-px bg-[#b0b2b4]" />
        <button aria-label="查找" className="mx-0.5 flex h-6 items-center border border-[#bfc1c3] bg-white">
          <span className="flex w-[27px] justify-center">
            <I s={16}>
              <path d="M3 1h3v3h4V1h3l3 9v5h-5.500V9h-5v6H0v-5z" fill="#444" />
              <path d="M2 9l1.500-5M12 9V5" stroke="#bbb" strokeWidth="1.500" />
            </I>
          </span>
          <span className="flex h-full w-[13px] items-center justify-center border-l border-[#bfc1c3]"><Arrow /></span>
        </button>
        <span className="mr-[97px] h-[27px] w-px bg-[#b0b2b4]" />
        <span className="relative flex h-6 w-[177px] items-center border border-[#bfc1c3] bg-white">
          <select aria-label="选择过滤器" className="h-full w-full appearance-none bg-transparent pl-[7px] text-[#333] outline-none">
            <option>几何</option>
          </select>
          <span className="pointer-events-none absolute inset-y-0 right-0 flex w-[15px] items-center justify-center border-l border-[#bfc1c3]"><Arrow /></span>
        </span>
      </div>
    </footer>
  );
}

function Watermark() {
  return (
    <div className="pointer-events-none absolute bottom-0.5 right-px flex h-[62px] w-[206px] bg-white/30">
      <svg width="58" height="62" viewBox="0 0 58 62" fill="none" className="shrink-0" aria-hidden="true">
        <path fillRule="evenodd" d="M3 17C-1 6 12 2 24 7 37 13 46 28 42 37 39 43 22 39 12 32 6 27 4 22 3 17zM7 15c2 8 9 15 17 19 8 3 15 3 16-2 1-8-8-19-18-23C14 6 5 8 7 15z" fill="#7f97aa" fillOpacity=".65" />
        <path d="M12 33c-4 8-1 16 5 17M14 36c4-4 10-5 16-2" stroke="#7f97aa" strokeOpacity=".4" strokeWidth="2" />
        <path fillRule="evenodd" d="M33 27c5-8 16-9 23-3 5 10-1 27-14 33-7 3-12 1-14-4 12 4 22-6 24-17 2-10-7-15-19-9z" fill="#e0525c" fillOpacity=".55" />
      </svg>
      <div className="flex flex-col whitespace-nowrap">
        <span className="pl-3 text-[29px] font-black leading-[38px] text-[#5cc08a]/65">野火论坛</span>
        <span className="text-[15px] leading-5 text-[#8fd3c8]/60">www.proewildfire.cn</span>
      </div>
    </div>
  );
}

export default function App() {
  return (
    <div className="relative flex h-screen flex-col overflow-hidden border-4 border-[#a3a3a3] bg-[#e2e2e2] text-[12px] leading-4 [font-family:'Noto_Sans','Noto_Sans_CJK_SC',sans-serif]">
      <TitleBar />
      <TabBar />
      <Ribbon />
      <div className="flex min-h-0 grow">
        <SidePanel />
        <Viewport />
      </div>
      <StatusBar />
      <Watermark />
    </div>
  );
}
